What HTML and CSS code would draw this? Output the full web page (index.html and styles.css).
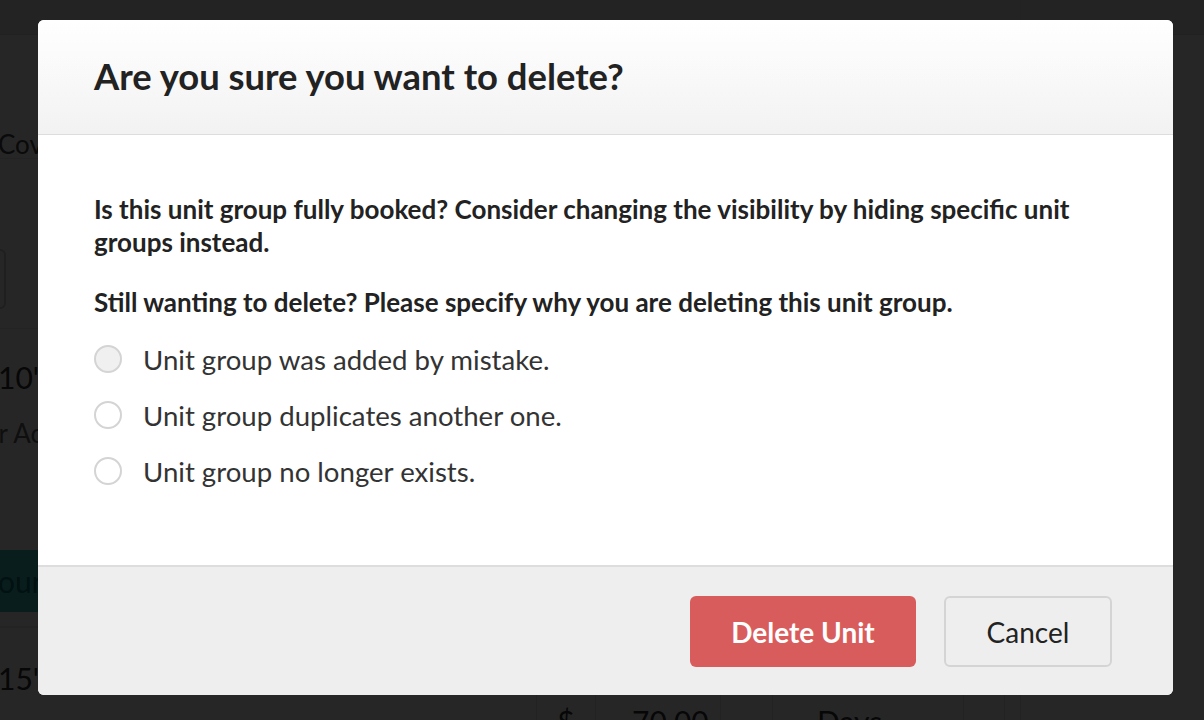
FILE: index.html
```html
<!DOCTYPE html>
<html lang="en">
<head>
  <meta charset="UTF-8" />
  <meta name="viewport" content="width=device-width, initial-scale=1" />
  <title>Unit groups - Delete</title>
  <link rel="stylesheet" href="styles.css">
</head>
<body>

  <!-- page behind the modal -->
  <div class="page">
    <div class="topbar"></div>
    <div class="side">
      <div class="side-row title-row">Cover</div>
      <div class="side-row input-row"><div class="fake-input"></div></div>
      <div class="side-row size-row">
        <div class="size">10'</div>
        <div class="size-sub">Your Account</div>
      </div>
      <div class="side-row btn-row"><div class="teal-btn">Account</div></div>
      <div class="side-row size-row small">
        <div class="size">15'</div>
      </div>
    </div>
    <div class="rate-row">
      <div class="cell cell-cur">$</div>
      <div class="cell cell-price">70.00</div>
      <div class="cell cell-gap"></div>
      <div class="cell cell-unit">Days <span class="caret">&#9660;</span></div>
      <div class="cell cell-end"></div>
    </div>
    <div class="divider"></div>
  </div>

  <div class="backdrop"></div>

  <div class="modal">
    <div class="modal-header">
      <h2>Are you sure you want to delete?</h2>
    </div>

    <div class="modal-body">
      <p>Is this unit group fully booked? Consider changing the visibility by hiding specific unit groups instead.</p>
      <p>Still wanting to delete? Please specify why you are deleting this unit group.</p>

      <div class="reasons">
        <label class="reason"><span class="radio hover"></span>Unit group was added by mistake.</label>
        <label class="reason"><span class="radio"></span>Unit group duplicates another one.</label>
        <label class="reason"><span class="radio"></span>Unit group no longer exists.</label>
      </div>
    </div>

    <div class="modal-footer">
      <button class="btn btn-danger">Delete Unit</button>
      <button class="btn btn-default">Cancel</button>
    </div>
  </div>

</body>
</html>
```

FILE: styles.css
```css
body {
  margin: 0;
  font-family: Lato, "Open Sans", sans-serif;
  background: #fff;
  color: #333;
  width: 1204px;
  height: 720px;
  overflow: hidden;
  position: relative;
}

/* page behind */
.page {
  height: 720px;
  position: relative;
}

.topbar {
  height: 34px;
  background: #e6e6e6;
  border-bottom: 1px solid #ddd;
}

.side {
  width: 120px;
}

.side-row {
  border-bottom: 1px solid #ececec;
}

.title-row {
  height: 124px;
  font-size: 26px;
  color: #444;
  line-height: 1;
  padding-top: 96px;
  box-sizing: border-box;
  margin-left: -2px;
}

.input-row {
  height: 170px;
  padding-top: 90px;
  box-sizing: border-box;
}

.fake-input {
  width: 4px;
  height: 56px;
  border: 2px solid #ccc;
  border-left: none;
  border-radius: 0 6px 6px 0;
}

.size-row {
  height: 298px;
  padding-top: 30px;
  box-sizing: border-box;
  position: relative;
}

.size {
  font-size: 30px;
  color: #333;
  margin-left: -2px;
}

.size-sub {
  font-size: 26px;
  color: #666;
  margin-top: 22px;
  margin-left: -44px;
  white-space: nowrap;
}

.btn-row {
  height: 0;
  border: none;
  position: relative;
}

.teal-btn {
  position: absolute;
  top: -77px;
  left: 0;
  width: 120px;
  height: 62px;
  background: #3ec3c3;
  color: #127070;
  font-size: 30px;
  line-height: 62px;
  text-indent: -50px;
  white-space: nowrap;
}

.size-row.small {
  border-top: 1px solid #ececec;
  border-bottom: none;
  height: 90px;
  padding-top: 32px;
}

.rate-row {
  position: absolute;
  left: 536px;
  top: 695px;
  display: flex;
  height: 40px;
  font-size: 30px;
  color: #333;
}

.cell {
  border-left: 1px solid #e4e4e4;
  height: 40px;
  box-sizing: border-box;
  padding-top: 8px;
}

.cell-cur { width: 59px; text-align: center; }
.cell-price { width: 125px; padding-left: 36px; }
.cell-gap { width: 52px; }
.cell-unit { width: 191px; padding-left: 44px; }
.cell-end { width: 42px; border-right: 1px solid #e4e4e4; }

.caret {
  font-size: 18px;
  margin-left: 46px;
}

.divider {
  position: absolute;
  left: 1020px;
  top: 0;
  width: 1px;
  height: 720px;
  background: #e0e0e0;
}

.backdrop {
  position: absolute;
  inset: 0;
  background: rgba(0, 0, 0, 0.85);
}

/* the modal */
.modal {
  position: absolute;
  top: 20px;
  left: 38px;
  width: 1135px;
  height: 675px;
  background: #fff;
  border-radius: 6px;
  display: flex;
  flex-direction: column;
  overflow: hidden;
}

.modal-header {
  height: 114px;
  flex-shrink: 0;
  border-bottom: 1px solid #ddd;
  background: linear-gradient(#fff, #f2f2f2);
  display: flex;
  align-items: center;
  padding: 0 56px;
}

.modal-header h2 {
  margin: 0;
  font-size: 36.4px;
  font-weight: 700;
  color: #222;
  padding-bottom: 2px;
}

.modal-body {
  flex: 1;
  padding: 58px 56px 0;
}

.modal-body p {
  margin: 0 0 27px;
  font-size: 26px;
  font-weight: 700;
  line-height: 33px;
  color: #222;
}

.reasons {
  display: flex;
  flex-direction: column;
  gap: 16px;
  margin-top: -7px;
}

.reason {
  display: flex;
  align-items: center;
  height: 40px;
  font-size: 27.6px;
  color: #333;
}

.radio {
  width: 24px;
  height: 24px;
  border: 2px solid #d4d4d4;
  border-radius: 50%;
  background: #fff;
  margin-right: 21px;
  flex-shrink: 0;
}

.radio.hover {
  background: #f0f0f0;
}

.modal-footer {
  border-top: 2px solid #ddd;
  background: #eee;
  height: 130px;
  flex-shrink: 0;
  padding: 29px 61px 0 0;
  box-sizing: border-box;
  display: flex;
  justify-content: flex-end;
  align-items: flex-start;
  gap: 28px;
}

.btn {
  height: 71px;
  border-radius: 6px;
  font-family: Lato, sans-serif;
  font-size: 28px;
  cursor: pointer;
}

.btn-danger {
  width: 226px;
  background: #d95c5c;
  color: #fff;
  border: none;
  font-weight: 700;
}

.btn-default {
  width: 168px;
  background: #eee;
  color: #222;
  border: 2px solid #d4d4d4;
}
```
